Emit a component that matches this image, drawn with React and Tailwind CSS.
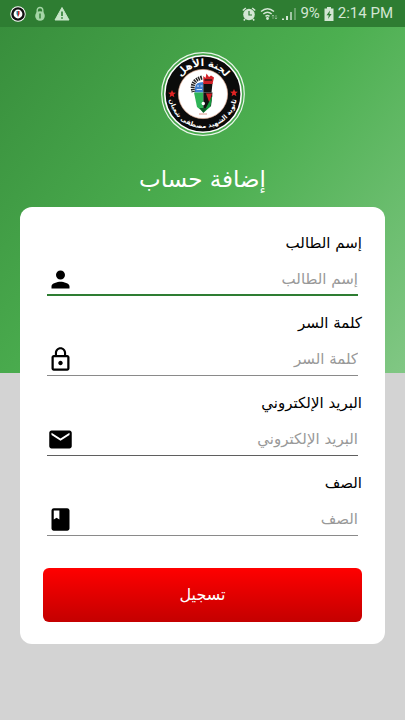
import React from 'react';
import { MdPerson, MdLockOutline, MdEmail, MdBook } from 'react-icons/md';

const fields = [
    { id: 'name', label: 'إسم الطالب', type: 'text', Icon: MdPerson, line: 'border-b-2 border-[#2e7d32]' },
    { id: 'password', label: 'كلمة السر', type: 'password', Icon: MdLockOutline, line: 'border-b border-[#8a8a8a]' },
    { id: 'email', label: 'البريد الإلكتروني', type: 'email', Icon: MdEmail, line: 'border-b border-[#5f5f5f]' },
    { id: 'class', label: 'الصف', type: 'text', Icon: MdBook, line: 'border-b border-[#8a8a8a]' },
];

const Star = ({ x, y }) => (
    <path
        transform={`translate(${x} ${y})`}
        d="M0 -4L1.1 -1.4L3.9 -1.3L1.7 .5L2.4 3.3L0 1.7L-2.4 3.3L-1.7 .5L-3.9 -1.3L-1.1 -1.4Z"
        fill="#e02424"
    />
);

const Emblem = () => (
    <svg viewBox="0 0 84 84" className="size-[84px]" role="img" aria-label="لجنة الأهل">
        <circle cx="42" cy="42" r="41.3" fill="none" stroke="#e8f5e9" strokeWidth="1.2" />
        <circle cx="42" cy="42" r="38.2" fill="#0b0b0b" stroke="#fff" strokeWidth="1.6" />
        <circle cx="42" cy="42" r="24.6" fill="#fff" stroke="#e9b49b" strokeWidth="0.7" />
        <defs>
            <path id="arc-top" d="M14 42A28 28 0 0 1 70 42" />
            <path id="arc-bottom" d="M8 42A34 34 0 0 0 76 42" />
        </defs>
        <text fill="#fff" fontSize="10" fontWeight="700" textAnchor="middle" className="font-['DejaVu_Sans',sans-serif]">
            <textPath href="#arc-top" startOffset="50%">لجنة الأهل</textPath>
        </text>
        <text fill="#fff" fontSize="6.5" fontWeight="700" textAnchor="middle" className="font-['DejaVu_Sans',sans-serif]">
            <textPath href="#arc-bottom" startOffset="50%">ثانوية الشهيد مصطفى شعبان</textPath>
        </text>
        <Star x={11} y={42} />
        <Star x={73} y={41} />
        {/* pen, split in four colours, with the torch above it */}
        <path d="M34 36Q34 30 42.300 30V40.500H34Z" fill="#3f7fd0" />
        <path d="M36 34H38M39.500 34H41.500M35.500 37.500H41" stroke="#d7e8fa" strokeWidth="1" />
        <path d="M42.300 31H51.500L50.500 40.500H42.300Z" fill="#111" />
        <path d="M42.300 32V24L44.500 26L45.500 21.500L48 25L50 23.500L53 25.500L51.500 32Z" fill="#d32027" />
        <path d="M43.500 28H51" stroke="#111" strokeWidth="1.200" />
        <path d="M33 40.500H42.300V60L36 55Z" fill="#2fb457" />
        <path d="M42.300 40.500H51.500L50 54L42.300 60Z" fill="#111" />
        <path d="M45 41.500H51L48.500 51Z" fill="#d32027" />
        <path d="M51.500 43L49.500 54.500L42.300 61L46.500 53Z" fill="#139a3c" />
        <path d="M38.500 56L42.300 61L46 56Z" fill="#0d5c26" />
        <circle cx="42.3" cy="51.5" r="1.7" fill="#fff" />
        <path d="M41 25.500Q29 29 32.500 40" fill="none" stroke="#222" strokeWidth="4" strokeDasharray="1.5 .8" />
        <path d="M38 62H46" stroke="#d07a6a" strokeWidth="0.8" />
    </svg>
);

const StatusBar = () => (
    <header className="flex h-[27px] items-center justify-between bg-[#2e7d32] pr-3 pl-[10px] font-[Roboto,sans-serif] text-[#d3e6d4]">
        <div className="flex items-center gap-2">
            <svg viewBox="0 0 16 16" className="size-4">
                <circle cx="8" cy="8" r="7.7" fill="#fff" />
                <circle cx="8" cy="8" r="5.6" fill="#fff" stroke="#111" strokeWidth="2.4" />
                <path d="M6.500 5H8V11L6.500 8Z" fill="#2f80a0" />
                <path d="M8 5H9.500V8L8 11Z" fill="#c62828" />
            </svg>
            <svg viewBox="0 0 12 16" className="h-4 w-3 text-[#a5d6a7]">
                <path d="M3.200 7V4.300A2.800 2.800 0 0 1 8.800 4.300V7" fill="none" stroke="currentColor" strokeWidth="1.4" />
                <circle cx="6" cy="10" r="4.8" fill="currentColor" />
                <path d="M6 7.500V12.500" stroke="#2e7d32" strokeWidth="1.4" />
            </svg>
            <svg viewBox="0 0 16 16" className="size-4">
                <path d="M8 1.500L15 14H1Z" fill="#c8e6c9" stroke="#c8e6c9" strokeLinejoin="round" />
                <path d="M8 5.500V10M8 11.200V12.800" stroke="#2e7d32" strokeWidth="1.6" />
            </svg>
        </div>
        <div className="flex items-center gap-1">
            <svg viewBox="0 0 14 14" className="size-[14px]">
                <circle cx="7" cy="7.500" r="5.8" fill="currentColor" />
                <path d="M.8 3.500L3.800 1M13.200 3.500L10.200 1M3 12L1.800 13.500M11 12L12.200 13.500" stroke="currentColor" strokeWidth="1.6" />
                <path d="M7 4V8H10" fill="none" stroke="#2e7d32" strokeWidth="1.2" />
            </svg>
            <svg viewBox="0 0 18 14" className="h-[14px] w-[18px]" fill="none" stroke="currentColor" strokeWidth="1.5">
                <path d="M1 4.500Q7.500 -1 14 4.500" />
                <path d="M3.300 7Q7.500 3.400 11.700 7" />
                <path d="M5.500 9.400Q7.500 7.700 9.500 9.400" />
                <circle cx="7.500" cy="11.500" r=".7" fill="currentColor" />
                <path d="M13 12V8M11.800 9.200L13 8L14.200 9.200M16 8V12M14.800 10.800L16 12L17.200 10.800" strokeWidth=".8" opacity=".6" />
            </svg>
            <svg viewBox="0 0 14 14" className="size-[14px]" fill="currentColor">
                <path d="M0 11.500H2V13H0ZM4 9H6V13H4Z" />
                <path d="M8 5H10V13H8Z" opacity=".7" />
                <path d="M12 1H14V13H12Z" opacity=".35" />
            </svg>
            <span className="text-[15px]">9%</span>
            <svg viewBox="0 0 10 14" className="h-[14px] w-[10px]">
                <path d="M3 0H7V1.500H9.500V14H.5V1.500H3Z" fill="currentColor" />
                <path d="M6 3.500L2.500 8.300H4.800L4 12L7.600 7H5.400Z" fill="#2e7d32" />
            </svg>
            <span className="text-[15px]">2:14 PM</span>
        </div>
    </header>
);

const Field = ({ id, label, type, Icon, line }) => (
    <div className="flex flex-col gap-[5px]">
        <label htmlFor={id} className="text-[15px] leading-6 text-black">
            {label}
        </label>
        <div className={`mx-1 flex h-9 items-center pt-1 ${line}`}>
            <input
                id={id}
                type={type}
                placeholder={label}
                className="min-w-0 flex-1 bg-transparent text-[15px] text-black outline-none placeholder:text-[#999]"
            />
            <Icon className="size-[27px] text-black" />
        </div>
    </div>
);

const App = () => (
    <div className="flex min-h-screen flex-col bg-[#d3d3d3]">
        <StatusBar />
        <main
            dir="rtl"
            className="flex flex-1 flex-col items-center bg-[linear-gradient(130deg,#388e3c,#4caf50_50%,#81c784)] bg-[length:100%_346px] bg-no-repeat px-5 pt-[25px] pb-10 font-['DejaVu_Sans',sans-serif]"
        >
            <Emblem />
            <h1 className="mt-[27px] text-[23px] leading-8 text-white">إضافة حساب</h1>
            <form className="mt-3 flex w-full flex-col gap-[15px] rounded-xl bg-white px-[23px] pt-6 pb-[22px]">
                {fields.map((field) => (
                    <Field key={field.id} {...field} />
                ))}
                <button
                    type="button"
                    className="mt-[17px] h-[54px] rounded-md bg-linear-to-b from-[#ff0000] to-[#c40000] text-base text-white"
                >
                    تسجيل
                </button>
            </form>
        </main>
    </div>
);

export default App;
